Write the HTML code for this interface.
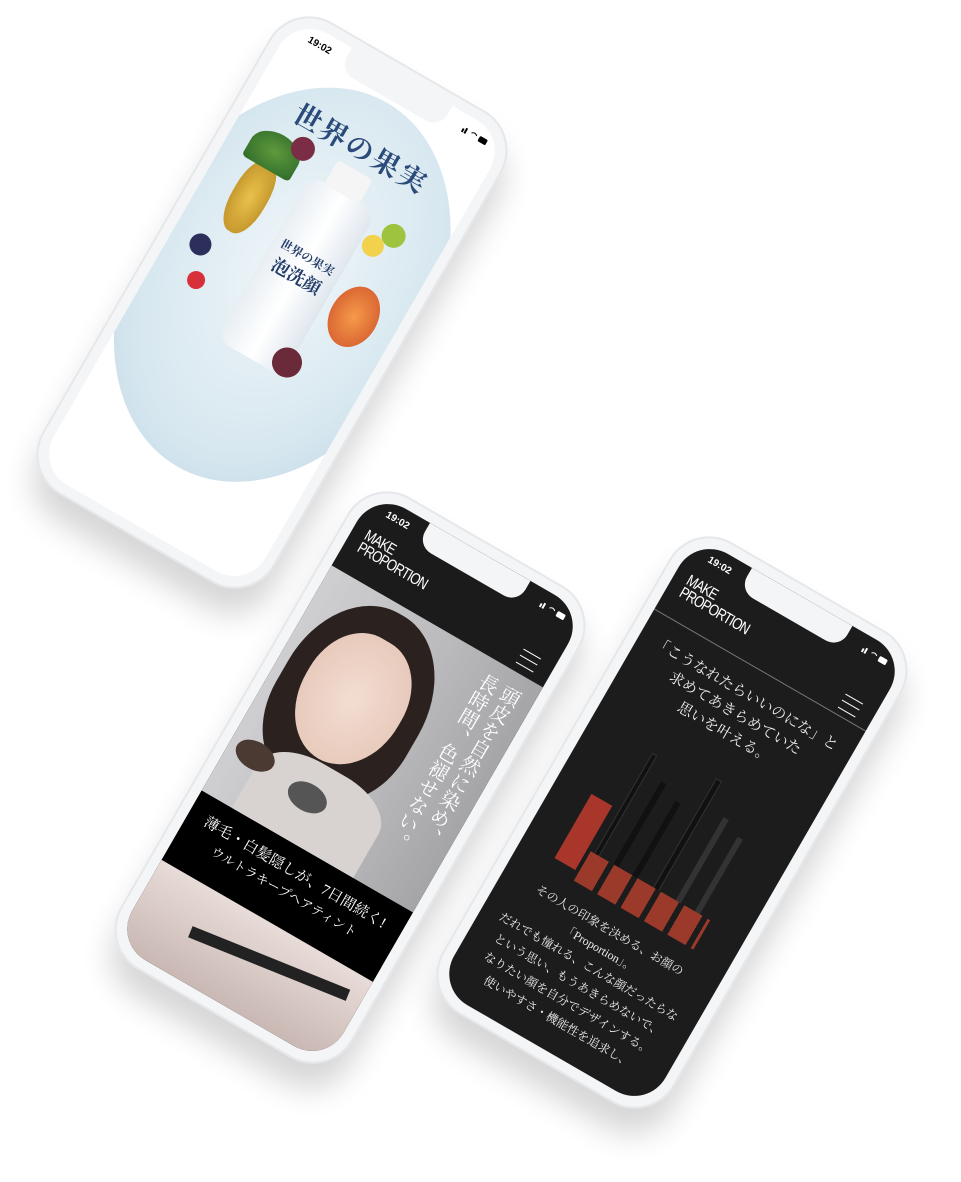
<!DOCTYPE html>
<html><head><meta charset="utf-8"><style>
*{margin:0;padding:0;box-sizing:border-box}
body{width:961px;height:1182px;background:#fff;position:relative;overflow:hidden;font-family:"Liberation Serif","Noto Serif CJK SC",serif}
.ph{position:absolute;width:268px;height:545px;border-radius:46px;background:#f4f5f7;transform:rotate(30deg);box-shadow:10px 24px 30px rgba(0,0,0,.16),inset 0 0 0 2px #e6e7ea}
.sc{position:absolute;left:12px;top:12px;right:12px;bottom:12px;border-radius:36px;overflow:hidden}
.notch{position:absolute;left:64px;top:0;width:116px;height:26px;background:#f4f5f7;border-radius:0 0 16px 16px;z-index:5}
.time{position:absolute;left:22px;top:9px;font:bold 10px "Liberation Sans",sans-serif;z-index:6}
.st{position:absolute;right:16px;top:11px;width:28px;height:7px;z-index:6}
.logo{position:absolute;font:300 16px/14px "Liberation Sans",sans-serif;letter-spacing:-1px;color:#fff;transform:scaleX(.8);transform-origin:left}
.ham{position:absolute;width:20px;height:16px;border-top:1.5px solid #fff;border-bottom:1.5px solid #fff}
.ham:after{content:"";position:absolute;left:0;right:0;top:6px;border-top:1.5px solid #fff}
.vt{position:absolute;writing-mode:vertical-rl;color:#fff;font-size:20px;line-height:25px}
</style></head><body>

<!-- phone 1 -->
<div class="ph" style="left:138px;top:30px">
 <div class="sc" style="background:#fff">
  <div class="time" style="color:#000">19:02</div>
  <svg class="st" viewBox="0 0 28 7"><rect x="0" y="3" width="2" height="4" fill="#000"/><rect x="3" y="1" width="2" height="6" fill="#000"/><path d="M10 3q3-3 6 0" stroke="#000" fill="none"/><rect x="19" y="1" width="9" height="6" rx="1.5" fill="#000"/></svg>
  <div class="notch"></div>
  <div style="position:absolute;left:-30px;top:30px;width:304px;height:420px;border-radius:50%;background:radial-gradient(ellipse at 50% 45%,#f0f6f9 0%,#d8e8f0 60%,#b9d3e1 100%)"></div>
  <div style="position:absolute;left:0;right:0;top:62px;text-align:center;color:#2a4a7a;font-size:28px;font-weight:bold;letter-spacing:2px">世界の果実</div>
  <div style="position:absolute;left:32px;top:140px;width:36px;height:80px;border-radius:45%;background:radial-gradient(#e9c14b,#b98a23)"></div>
  <div style="position:absolute;left:22px;top:110px;width:54px;height:38px;background:radial-gradient(#5f9a3c,#2e6a2a);border-radius:50% 50% 10% 10%"></div>
  <div style="position:absolute;left:92px;top:130px;width:76px;height:190px;border-radius:16px;background:linear-gradient(90deg,#e8eef3,#fff,#dfe7ee)"></div>
  <div style="position:absolute;left:108px;top:104px;width:40px;height:28px;background:#f5f5f5;border-radius:4px"></div>
  <div style="position:absolute;left:96px;top:195px;width:68px;text-align:center;font-size:12px;color:#233c6a;font-weight:bold">世界の果実<br><span style="font-size:18px">泡洗顔</span></div>
  <div style="position:absolute;left:176px;top:200px;width:48px;height:64px;border-radius:50%;background:radial-gradient(#f59a4a,#d0532a)"></div>
  <div style="position:absolute;left:182px;top:130px;width:24px;height:24px;border-radius:50%;background:#9ec43f"></div>
  <div style="position:absolute;left:60px;top:100px;width:24px;height:24px;border-radius:50%;background:#7a2d45"></div>
  <div style="position:absolute;left:150px;top:290px;width:30px;height:30px;border-radius:50%;background:#6b2a3a"></div>
  <div style="position:absolute;left:36px;top:270px;width:18px;height:18px;border-radius:50%;background:#d8303a"></div>
  <div style="position:absolute;left:170px;top:150px;width:22px;height:22px;border-radius:50%;background:#f2d24c"></div>
  <div style="position:absolute;left:20px;top:235px;width:22px;height:22px;border-radius:50%;background:#2b2f5a"></div>
 </div>
</div>

<!-- phone 2 -->
<div class="ph" style="left:216px;top:505px">
 <div class="sc" style="background:#1b1b1b">
  <div class="time" style="color:#fff">19:02</div>
  <svg class="st" viewBox="0 0 28 7"><rect x="0" y="3" width="2" height="4" fill="#fff"/><rect x="3" y="1" width="2" height="6" fill="#fff"/><path d="M10 3q3-3 6 0" stroke="#fff" fill="none"/><rect x="19" y="1" width="9" height="6" rx="1.5" fill="#fff"/></svg>
  <div class="notch"></div>
  <div class="logo" style="left:14px;top:36px">MAKE<br>PROPORTION</div>
  <div class="ham" style="right:16px;top:62px"></div>
  <div style="position:absolute;left:0;right:0;top:86px;height:260px;background:linear-gradient(90deg,#cfcfd1,#b9b9bc 60%,#a5a5a8)"></div>
  <div style="position:absolute;left:10px;top:94px;width:150px;height:200px;border-radius:48% 48% 40% 40%;background:#2b2220"></div>
  <div style="position:absolute;left:32px;top:124px;width:106px;height:136px;border-radius:45% 45% 50% 50%;background:radial-gradient(#f3ddd2,#e3c3b3)"></div>
  <div style="position:absolute;left:35px;top:262px;width:140px;height:84px;background:#d8d3d0;border-radius:40% 40% 0 0"></div>
  <div class="vt" style="right:14px;top:100px;height:220px">頭皮を自然に染め、<br>長時間、色褪せない。</div>
  <div style="position:absolute;left:8px;top:275px;width:42px;height:28px;border-radius:50%;background:#4a3a32"></div>
  <div style="position:absolute;left:74px;top:285px;width:42px;height:28px;border-radius:50%;background:#555"></div>
  <div style="position:absolute;left:0;right:0;top:346px;height:80px;background:#000;color:#fff;text-align:center;font-size:15px;line-height:22px;padding-top:14px">薄毛・白髪隠しが、7日間続く!<br><span style="font-size:13px">ウルトラキープヘアティント</span></div>
  <div style="position:absolute;left:0;right:0;top:426px;bottom:0;background:linear-gradient(#e8dcd8,#c9b8b3)"></div>
  <div style="position:absolute;left:60px;top:456px;width:170px;height:12px;background:#222;transform:rotate(-8deg)"></div>
 </div>
</div>

<!-- phone 3 -->
<div class="ph" style="left:538px;top:550px">
 <div class="sc" style="background:#1c1c1c">
  <div class="time" style="color:#fff">19:02</div>
  <svg class="st" viewBox="0 0 28 7"><rect x="0" y="3" width="2" height="4" fill="#fff"/><rect x="3" y="1" width="2" height="6" fill="#fff"/><path d="M10 3q3-3 6 0" stroke="#fff" fill="none"/><rect x="19" y="1" width="9" height="6" rx="1.5" fill="#fff"/></svg>
  <div class="notch"></div>
  <div class="logo" style="left:14px;top:36px">MAKE<br>PROPORTION</div>
  <div class="ham" style="right:16px;top:62px"></div>
  <div style="position:absolute;left:0;right:0;top:84px;border-top:1px solid #777"></div>
  <div style="position:absolute;left:0;right:0;top:102px;text-align:center;color:#eee;font-size:15px;line-height:22px">「こうなれたらいいのにな」と<br>求めてあきらめていた<br>思いを叶える。</div>
  <div style="position:absolute;left:38px;top:200px;width:170px;height:160px">
   <div style="position:absolute;left:0;top:76px;width:24px;height:74px;background:#a8362b"></div>
   <div style="position:absolute;left:32px;top:10px;width:6px;height:120px;background:#111;border:1px solid #333"></div>
   <div style="position:absolute;left:54px;top:30px;width:6px;height:100px;background:#111"></div>
   <div style="position:absolute;left:76px;top:40px;width:6px;height:90px;background:#111"></div>
   <div style="position:absolute;left:100px;top:0;width:7px;height:130px;background:#111;border:1px solid #333"></div>
   <div style="position:absolute;left:126px;top:30px;width:6px;height:100px;background:#333"></div>
   <div style="position:absolute;left:148px;top:40px;width:6px;height:90px;background:#333"></div>
   <div style="position:absolute;left:28px;top:126px;width:138px;height:34px;background:repeating-linear-gradient(90deg,#9b3a2a 0 21px,#1c1c1c 21px 27px)"></div>
  </div>
  <div style="position:absolute;left:0;right:0;top:375px;text-align:center;color:#eee;font-size:12px;line-height:21px">その人の印象を決める、お顔の<br>「Proportion」。<br>だれでも憧れる、こんな顔だったらな<br>という思い、もうあきらめないで、<br>なりたい顔を自分でデザインする。<br>使いやすさ・機能性を追求し、</div>
 </div>
</div>
</body></html>
